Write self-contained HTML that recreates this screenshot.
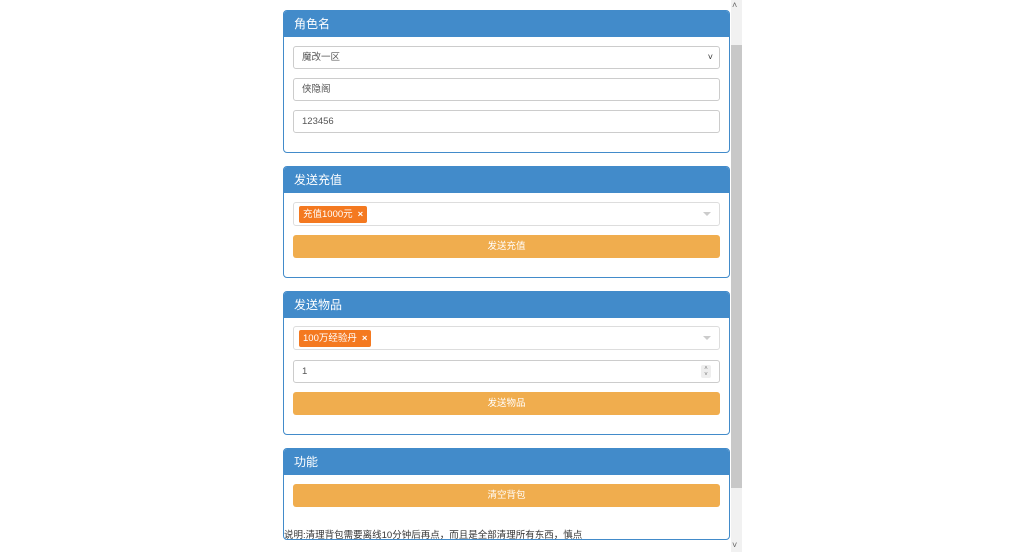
<!DOCTYPE html>
<html><head><meta charset="utf-8"><style>
*{box-sizing:border-box;margin:0;padding:0}
body{width:1024px;height:552px;background:#fff;font-family:"Liberation Sans","Noto Sans CJK SC",sans-serif;position:relative;overflow:hidden;font-size:10px;color:#555}
.panel{position:absolute;left:283px;width:447px;border:1px solid #428bca;border-radius:4px;background:#fff}
.hd{background:#428bca;color:#fff;height:26px;line-height:26px;padding-left:10px;font-size:12px;border-radius:3px 3px 0 0}
.in{position:absolute;left:9px;width:427px;height:23px;border:1px solid #ccc;border-radius:3px;line-height:21px;padding-left:8px;font-size:9.5px;color:#555;background:#fff}
.btn{position:absolute;left:9px;width:427px;height:23px;background:#f0ad4e;border-radius:3px;color:#fff;text-align:center;line-height:23px;font-size:9.5px}
.tag{position:absolute;left:5px;top:3px;height:17px;line-height:17px;background:#f47920;color:#fff;border-radius:2px;padding:0 4px;font-size:9.5px}
.tag b{margin-left:5px;font-weight:bold}
.caret{position:absolute;right:8px;top:9px;width:0;height:0;border-left:4px solid transparent;border-right:4px solid transparent;border-top:4px solid #ccc}
.sb{position:absolute;left:731px;top:0;width:11px;height:552px;background:#f1f1f1}
.th{position:absolute;left:731px;top:45px;width:11px;height:443px;background:#c8c8c8}
</style></head><body>
<div class="sb"></div><div class="th"></div>
<div style="position:absolute;left:732px;top:0;font-size:9px;color:#666">&#708;</div>
<div style="position:absolute;left:732px;top:540px;font-size:9px;color:#666">&#709;</div>

<div class="panel" style="top:10px;height:143px">
<div class="hd">角色名</div>
<div class="in" style="top:35px">魔改一区<span style="position:absolute;right:6px;top:0;font-size:9px;color:#333">&#709;</span></div>
<div class="in" style="top:67px">侠隐阁</div>
<div class="in" style="top:99px">123456</div>
</div>

<div class="panel" style="top:166px;height:112px">
<div class="hd">发送充值</div>
<div class="in" style="top:35px;height:24px;border-color:#ddd"><span class="tag">充值1000元<b>×</b></span><span class="caret"></span></div>
<div class="btn" style="top:68px">发送充值</div>
</div>

<div class="panel" style="top:291px;height:144px">
<div class="hd">发送物品</div>
<div class="in" style="top:34px;height:24px;border-color:#ddd"><span class="tag">100万经验丹<b>×</b></span><span class="caret"></span></div>
<div class="in" style="top:68px">1<span style="position:absolute;right:8px;top:4px;width:10px;height:13px;background:#eee;border-radius:2px;font-size:6px;line-height:6px;text-align:center;color:#777;padding-top:1px">&#708;<br>&#709;</span></div>
<div class="btn" style="top:100px">发送物品</div>
</div>

<div class="panel" style="top:448px;height:92px">
<div class="hd">功能</div>
<div class="btn" style="top:35px">清空背包</div>
<div style="position:absolute;left:0;top:78px;font-size:9.5px;color:#333">说明:清理背包需要离线10分钟后再点，而且是全部清理所有东西，慎点</div>
</div>
</body></html>
